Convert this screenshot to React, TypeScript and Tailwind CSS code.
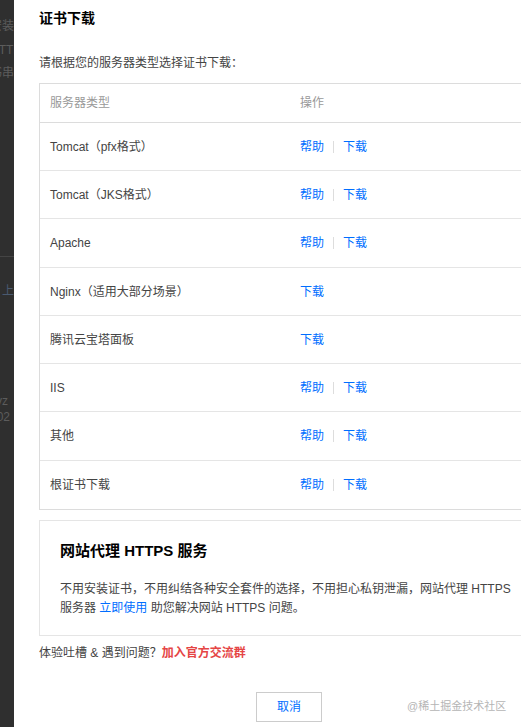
import React from 'react';

const rows: { name: string; help: boolean }[] = [
  { name: 'Tomcat（pfx格式）', help: true },
  { name: 'Tomcat（JKS格式）', help: true },
  { name: 'Apache', help: true },
  { name: 'Nginx（适用大部分场景）', help: false },
  { name: '腾讯云宝塔面板', help: false },
  { name: 'IIS', help: true },
  { name: '其他', help: true },
  { name: '根证书下载', help: true },
];

const font = { fontFamily: '"Liberation Sans", "Noto Sans CJK SC", sans-serif' };

export default function App() {
  return (
    <div className="flex h-[727px] w-[521px] overflow-hidden bg-white" style={font}>
      {/* page behind the mask */}
      <div className="w-[14px] shrink-0 overflow-hidden bg-[#2f2f2f] text-[12px] text-[#5c5c5c]">
        <div className="-ml-[10px] w-[60px]">
          <div className="mt-[17px] leading-[18px]">安装</div>
          <div className="mt-[6px] leading-[18px]">HTTP</div>
          <div className="mt-[5px] leading-[18px]">书串</div>
          <div className="mt-[174px] h-px bg-[#444]" />
          <div className="mt-[25px] pl-[12px] leading-[18px] text-[#4a5a70]">上</div>
          <div className="mt-[93px] leading-[16px]">xyz</div>
          <div className="leading-[16px]">202</div>
        </div>
      </div>

      {/* drawer */}
      <div className="relative min-w-0 flex-1 overflow-hidden">
        <div className="w-[560px] pl-[25px]">
          <h2 className="pt-[8px] text-[14px] font-bold leading-[20px] text-[#000]">证书下载</h2>
          <p className="mt-[26px] text-[12px] leading-[18px] text-[#444]">请根据您的服务器类型选择证书下载：</p>

          <div className="mt-[11px] border border-[#dcdcdc]">
            <div className="flex h-[39px] items-center border-b border-[#dcdcdc] text-[12px] text-[#999]">
              <div className="w-[260px] pl-[10px]">服务器类型</div>
              <div>操作</div>
            </div>
            {rows.map((r, i) => (
              <div
                key={r.name}
                className={`flex items-center text-[12px] text-[#444] ${i % 4 === 2 ? 'h-[49px]' : 'h-[48px]'} ${i < rows.length - 1 ? 'border-b border-[#e5e5e5]' : ''}`}
              >
                <div className="w-[260px] pl-[10px]">{r.name}</div>
                <div className="flex items-center text-[#006eff]">
                  {r.help && (
                    <>
                      <span>帮助</span>
                      <span className="mx-[9px] h-[12px] w-px bg-[#ddd]" />
                    </>
                  )}
                  <span>下载</span>
                </div>
              </div>
            ))}
          </div>

          <div className="mt-[10px] border border-[#e5e5e5] pb-[17px] pl-[20px] pt-[19px]">
            <h3 className="text-[15px] font-bold leading-[22px] text-[#000]">网站代理 HTTPS 服务</h3>
            <p className="mt-[18px] w-[460px] text-[12px] leading-[19px] text-[#444]">
              不用安装证书，不用纠结各种安全套件的选择，不用担心私钥泄漏，网站代理 HTTPS 服务器{' '}
              <span className="text-[#006eff]">立即使用</span> 助您解决网站 HTTPS 问题。
            </p>
          </div>

          <p className="mt-[8px] text-[12px] leading-[18px] text-[#444]">
            体验吐槽 &amp; 遇到问题？<span className="font-bold text-[#e54545]">加入官方交流群</span>
          </p>

          <div className="mt-[30px] flex">
            <button className="ml-[217px] flex h-[30px] w-[66px] items-center justify-center border border-[#ccc] bg-white text-[12px] text-[#006eff]">
              取消
            </button>
          </div>
        </div>

        {/* watermark */}
        <span className="absolute left-[393px] top-[698px] text-[11px] leading-[16px] text-[#b5b5b5]">@稀土掘金技术社区</span>
      </div>
    </div>
  );
}
